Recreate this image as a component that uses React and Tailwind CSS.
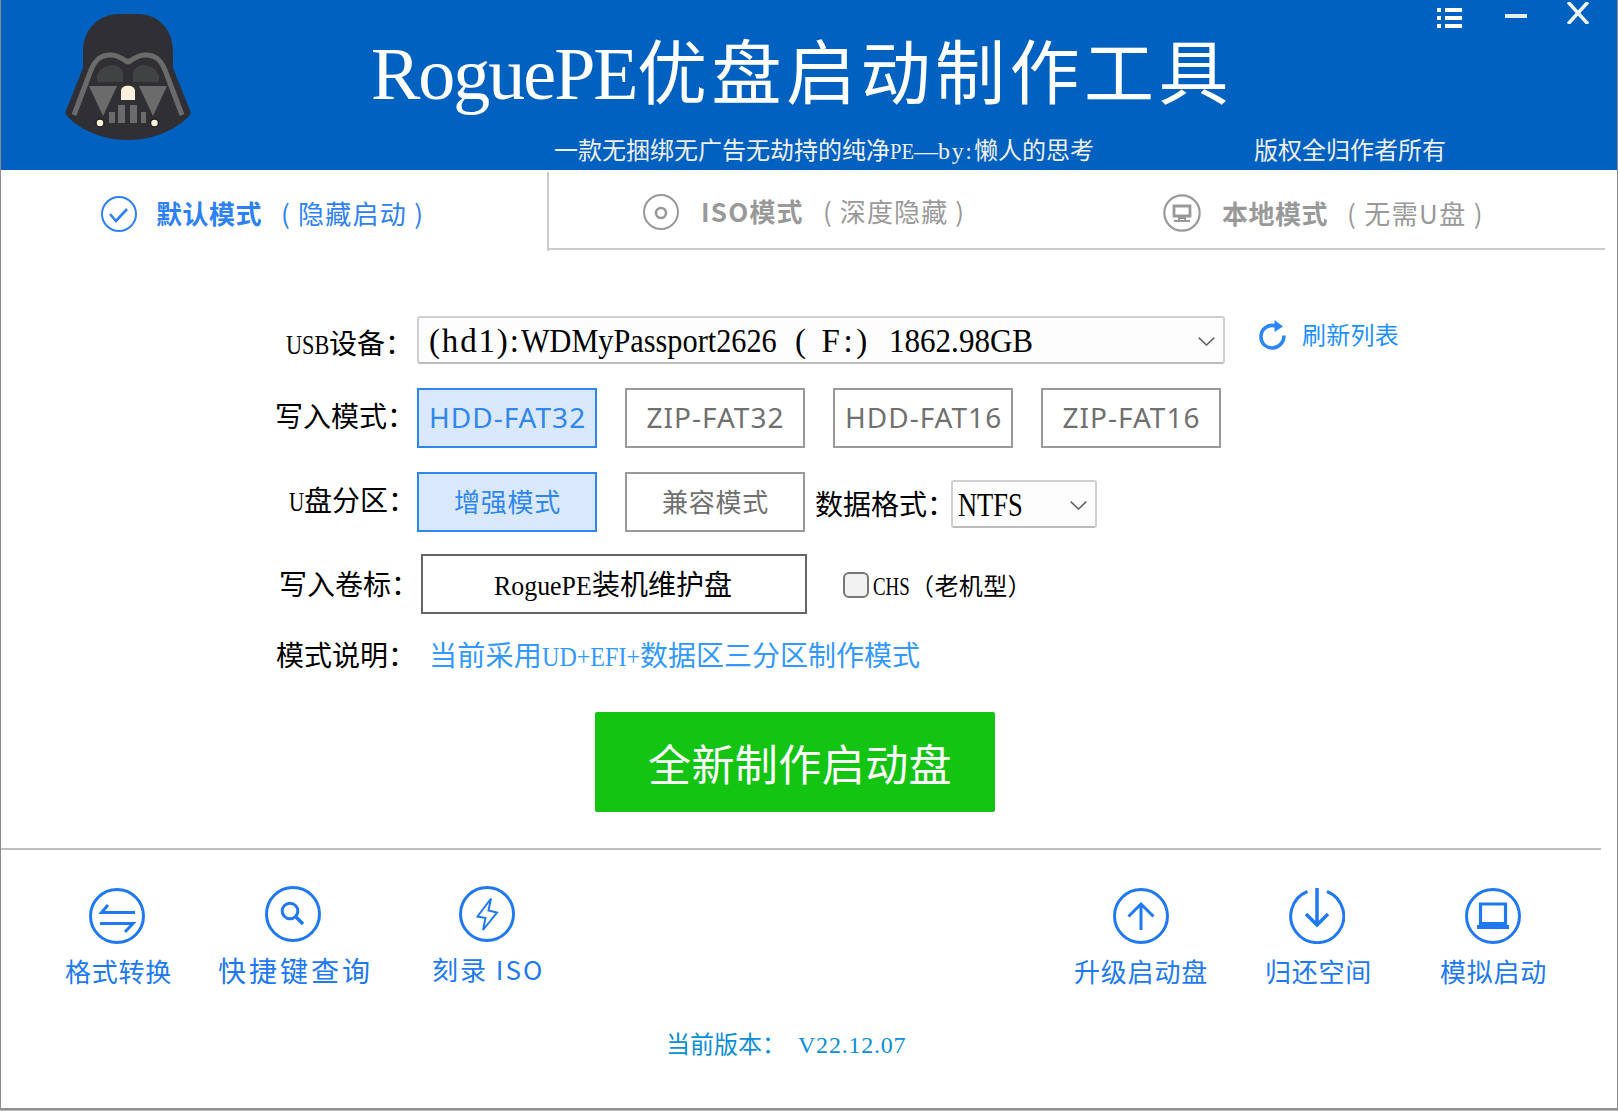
import { useLayoutEffect, useRef } from "react";

const SONG = "font-['Liberation_Serif','Noto_Sans_CJK_SC',serif]";
const HEI = "font-['Noto_Sans_CJK_SC',sans-serif]";

// Fits its text to the width of its box, by letter spacing or, with squeeze, by narrowing the glyphs.
function Fit({ className, squeeze, children }) {
  const box = useRef(null);
  const text = useRef(null);
  useLayoutEffect(() => {
    const natural = text.current.offsetWidth;
    const room = box.current.clientWidth;
    if (squeeze) {
      text.current.style.transform = `scaleX(${room / natural})`;
    } else {
      text.current.style.letterSpacing = (room - natural) / children.length + "px";
    }
  }, [children, squeeze]);
  return (
    <div ref={box} className={"shrink-0 whitespace-pre leading-none " + className}>
      <span ref={text} className={squeeze ? "block w-max origin-left" : ""}>{children}</span>
    </div>
  );
}

function HelmetLogo() {
  return (
    <svg className="mt-[14px] ml-16 h-[126px] w-[126px] shrink-0" viewBox="0 0 126 126">
      <path d="M18 54V38C18 15 34 0 54 0H73C93 0 108 15 108 38V54L126 99C122 107 98 126 63 126S4 107 0 99Z" fill="#303034" />
      <path d="M9 101L26 56C31 44 37 41 46 41C54 41 57 45 63 48C69 45 72 41 80 41C89 41 95 44 100 56L117 101" fill="none" stroke="#6b6b6b" strokeWidth="5" />
      <path d="M32 68V62C36 49 54 47 58 59V68ZM94 68V62C90 49 72 47 68 59V68Z" fill="#3f4344" />
      <path d="M24 72H52L38 102ZM74 72H102L88 102Z" fill="#6b6b6b" />
      <path d="M56 86V77C56 70 70 70 70 77V86Z" fill="#fdf0dd" />
      <path d="M44 98H50V109H44ZM53 91H60V109H53ZM65 91H72V109H65ZM76 98H81V109H76Z" fill="#6b6b6b" />
      <circle cx="35" cy="109" r="4" fill="#fdf0dd" stroke="#1f1f23" strokeWidth="1.5" />
      <circle cx="89.500" cy="109" r="4" fill="#fdf0dd" stroke="#1f1f23" strokeWidth="1.5" />
    </svg>
  );
}

function Header() {
  return (
    <header className="flex h-[170px] items-start bg-[#0061c1] text-white">
      <HelmetLogo />
      <div className="ml-[180px] w-[855px]">
        <div className={"mt-[37px] flex h-[74px] " + SONG}>
          <Fit className="w-[266px] text-[74px]">RoguePE</Fit>
          <Fit className="mt-[4px] w-[596px] text-[70px]">优盘启动制作工具</Fit>
        </div>
        <div className={"mt-[28px] flex text-[24px] text-[#f0f0f0] " + SONG}>
          <Fit className="ml-[183px] w-[336px]">一款无捆绑无广告无劫持的纯净</Fit>
          <Fit squeeze className="w-[24px]">PE</Fit>
          <Fit className="w-[24px]">—</Fit>
          <Fit className="w-[36px]">by:</Fit>
          <Fit className="w-[120px]">懒人的思考</Fit>
          <Fit className="ml-[160px] w-[192px]">版权全归作者所有</Fit>
        </div>
      </div>
      <svg className="mt-[8px] ml-[211px] h-5 w-[25px]" viewBox="0 0 25 20" fill="#fff">
        <path d="M0 0H4V4H0ZM8 0H25V4H8ZM0 8H4V12H0ZM8 8H25V12H8ZM0 16H4V20H0ZM8 16H25V20H8Z" />
      </svg>
      <div className="mt-[14px] ml-[43px] h-1 w-[22px] bg-[#e6eefa]" />
      <svg className="mt-[2px] ml-[40px] h-[22px] w-[22px]" viewBox="0 0 22 22" stroke="#f0f5fb" strokeWidth="3.600">
        <path d="M1 0L21 22M21 0L1 22" />
      </svg>
    </header>
  );
}

function Tabs() {
  return (
    <nav className={"flex h-[81px] items-start text-[26px] " + HEI}>
      <div className="flex h-[81px] w-[546px] shrink-0 items-start text-[#2d81f2]">
        <svg className="mt-[26px] ml-[100px] h-9 w-9" viewBox="0 0 36 36" fill="none" stroke="currentColor" strokeWidth="2">
          <circle cx="18" cy="18" r="17" />
          <path d="M9 18L15 25L26 13" strokeWidth="2.600" />
        </svg>
        <Fit className="mt-[30px] ml-[19px] w-[106px] font-bold">默认模式</Fit>
        <Fit className="mt-[30px] ml-[19px] w-[143px]">( 隐藏启动 )</Fit>
      </div>
      <div className="mt-[2px] h-[79px] w-[2px] shrink-0 bg-[#ccc]" />
      <div className="flex h-[80px] w-[1056px] shrink-0 items-start border-b-2 border-[#ccc] text-[#999]">
        <svg className="mt-[24px] ml-[94px] h-9 w-9" viewBox="0 0 36 36" fill="none" stroke="currentColor" strokeWidth="2">
          <circle cx="18" cy="18" r="17" />
          <circle cx="18" cy="19" r="5" strokeWidth="2.600" />
        </svg>
        <Fit className="mt-[28px] ml-[22px] w-[103px] font-bold">ISO模式</Fit>
        <Fit className="mt-[28px] ml-[19px] w-[142px]">( 深度隐藏 )</Fit>
        <svg className="mt-[24px] ml-[198px] h-[38px] w-[38px]" viewBox="0 0 38 38" fill="none" stroke="currentColor" strokeWidth="2.200">
          <circle cx="19" cy="19" r="17.700" />
          <path d="M11 12H27V22H11Z" strokeWidth="2.800" />
          <path d="M16 24H22V27H16ZM11 27H27" />
        </svg>
        <Fit className="mt-[30px] ml-[21px] w-[106px] font-bold">本地模式</Fit>
        <Fit className="mt-[30px] ml-[19px] w-[137px]">( 无需U盘 )</Fit>
      </div>
    </nav>
  );
}

function Choice({ active, textClass, children }) {
  return (
    <div
      className={
        "flex h-[60px] w-[180px] shrink-0 items-start justify-center border-2 " +
        (active ? "border-[#2e86ee] bg-[#dae8fb] text-[#2e86ee]" : "border-[#999] bg-white text-[#707070]")
      }
    >
      <Fit className={textClass}>{children}</Fit>
    </div>
  );
}

function Chevron() {
  return (
    <svg className="h-[9px] w-[17px]" viewBox="0 0 17 9" fill="none" stroke="#666" strokeWidth="1.600">
      <path d="M0.700 0.700L8.500 8L16.300 0.700" />
    </svg>
  );
}

const fat = "mt-[13px] ml-[1px] text-[28px] font-['Noto_Sans',sans-serif] ";
const part = "mt-[14px] ml-[1px] w-[107px] text-[26px] " + HEI;

function Form() {
  return (
    <main className={"h-[597px] text-[28px] text-black " + SONG}>
      <div className="flex items-start pt-[65px]">
        <Fit squeeze className="mt-[15px] ml-[285px] w-[43px]">USB</Fit>
        <Fit className="mt-[15px] w-[84px]">设备：</Fit>
        <div className="ml-[4px] flex h-[48px] w-[808px] items-start rounded-[3px] border-2 border-[#d0d0d0] border-b-[#bbb] bg-[#fdfdfd] text-[33px]">
          <Fit className="mt-[7px] ml-[10px] w-[92px]">(hd1):</Fit>
          <Fit squeeze className="mt-[7px] w-[256px]">WDMyPassport2626</Fit>
          <Fit className="mt-[7px] ml-[18px] w-[76px]">( F:)</Fit>
          <Fit squeeze className="mt-[7px] ml-[18px] w-[144px]">1862.98GB</Fit>
          <div className="mt-[19px] ml-[165px]">
            <Chevron />
          </div>
        </div>
        <svg className="mt-[4px] ml-[34px] h-[30px] w-[27px]" viewBox="0 0 27 30" fill="none">
          <path d="M18 6.500C10 3 2 8.500 2 16.500S8 28 13.500 28S25 23 25 15.500" stroke="#2b86f5" strokeWidth="3.600" />
          <path d="M15.500 0L24 6.500L15.500 12Z" fill="#2b86f5" />
        </svg>
        <Fit className={"mt-[6px] ml-[16px] w-[97px] text-[24px] text-[#1e90ff] " + HEI}>刷新列表</Fit>
      </div>

      <div className="mt-6 flex items-start">
        <Fit className="mt-[16px] ml-[274px] w-[140px]">写入模式：</Fit>
        <div className="ml-[2px] flex gap-7">
          <Choice active textClass={fat + "w-[157px]"}>HDD-FAT32</Choice>
          <Choice textClass={fat + "w-[138px]"}>ZIP-FAT32</Choice>
          <Choice textClass={fat + "w-[157px]"}>HDD-FAT16</Choice>
          <Choice textClass={fat + "w-[138px]"}>ZIP-FAT16</Choice>
        </div>
      </div>

      <div className="mt-6 flex items-start">
        <Fit squeeze className="mt-[16px] ml-[288px] w-[15px]">U</Fit>
        <Fit className="mt-[16px] w-[112px]">盘分区：</Fit>
        <div className="ml-[1px] flex gap-7">
          <Choice active textClass={part}>增强模式</Choice>
          <Choice textClass={part}>兼容模式</Choice>
        </div>
        <Fit className="mt-[20px] -mr-[4px] ml-[10px] w-[140px]">数据格式：</Fit>
        <div className="mt-[8px] flex h-[48px] w-[146px] items-start rounded-[3px] border-2 border-[#d0d0d0] border-b-[#bbb] bg-[#fdfdfd]">
          <Fit squeeze className="mt-[7px] ml-[5px] w-[65px] text-[33px]">NTFS</Fit>
          <div className="mt-[19px] ml-[47px]">
            <Chevron />
          </div>
        </div>
      </div>

      <div className="mt-[22px] flex items-start">
        <Fit className="mt-[18px] ml-[278px] w-[140px]">写入卷标：</Fit>
        <div className="ml-[2px] flex h-[60px] w-[386px] items-start border-2 border-[#666] bg-white">
          <Fit squeeze className="mt-[16px] ml-[71px] w-[98px]">RoguePE</Fit>
          <Fit className="mt-[16px] w-[140px]">装机维护盘</Fit>
        </div>
        <div className="mt-[18px] ml-[36px] h-[26px] w-[26px] rounded-[6px] border-2 border-[#777] bg-[#f2f2f2]" />
        <Fit squeeze className="mt-[20px] ml-[4px] w-[37px] text-[25px]">CHS</Fit>
        <Fit className="mt-[21px] w-[122px] text-[24px]">（老机型）</Fit>
      </div>

      <div className="mt-[29px] flex items-start">
        <Fit className="ml-[275px] w-[140px]">模式说明：</Fit>
        <div className="ml-[13px] flex text-[#3399ff]">
          <Fit className="w-[113px]">当前采用</Fit>
          <Fit squeeze className="w-[98px]">UD+EFI+</Fit>
          <Fit className="w-[280px]">数据区三分区制作模式</Fit>
        </div>
      </div>

      <div className={"mt-[41px] ml-[594px] flex h-[100px] w-[400px] items-start justify-center rounded-[2px] bg-[#13c413] text-[43px] text-white " + HEI}>
        <Fit className="mt-[29px] ml-[10px] w-[304px]">全新制作启动盘</Fit>
      </div>
    </main>
  );
}

function Ring({ children, open }) {
  return (
    <svg className="h-14 w-14" viewBox="0 0 56 56" fill="none" stroke="currentColor" strokeWidth="3">
      {open ? <path d="M18.500 3.500A26.500 26.500 0 1 0 38 3.500" /> : <circle cx="28" cy="28" r="26.500" />}
      {children}
    </svg>
  );
}

function Tool({ className, icon, open, label, labelClass }) {
  return (
    <div className={"flex shrink-0 flex-col items-start " + className}>
      <Ring open={open}>{icon}</Ring>
      <Fit className={"mt-[14px] " + labelClass}>{label}</Fit>
    </div>
  );
}

function Toolbar() {
  return (
    <section className={"flex h-[172px] w-[1600px] items-start border-t-2 border-[#bfbfbf] text-[26px] text-[#2079f0] " + HEI}>
      <Tool
        className="mt-[38px] ml-[88px] w-[88px]"
        label="格式转换"
        labelClass="w-[107px] -ml-[24px]"
        icon={<path d="M19 17L12.500 24.500H46M11 35.500H44L36 44" />}
      />
      <Tool
        className="mt-[36px] ml-[88px] w-[106px]"
        label="快捷键查询"
        labelClass="w-[155px] -ml-[47px] text-[28px]"
        icon={<><circle cx="25" cy="25" r="7.800" /><path d="M30.500 30.500L38 38" strokeWidth="3.500" /></>}
      />
      <Tool
        className="mt-[36px] ml-[88px] w-[84px]"
        label="刻录 ISO"
        labelClass="w-[112px] -ml-[27px]"
        icon={<path d="M32 12.500L18.500 30.500L26.500 32L24 44L38 26.500L29.500 24.500Z" strokeWidth="2" />}
      />
      <Tool
        className="mt-[38px] ml-[570px] w-[88px]"
        label="升级启动盘"
        labelClass="w-[134px] -ml-[39px]"
        icon={<path d="M28 42V16M15.500 28.500L28 16L40.500 28.500" />}
      />
      <Tool
        className="mt-[38px] ml-[88px] w-[88px]"
        open
        label="归还空间"
        labelClass="w-[107px] -ml-[24px]"
        icon={<path d="M28 0V36M17 26L28 37L39 26" strokeWidth="3.500" />}
      />
      <Tool
        className="mt-[38px] ml-[88px] w-[88px]"
        label="模拟启动"
        labelClass="w-[107px] -ml-[25px]"
        icon={<><path d="M15.500 16H40.500V36H15.500Z" strokeWidth="3.200" /><path d="M15 34H41V37H44V41H12V37H15Z" fill="currentColor" stroke="none" /></>}
      />
    </section>
  );
}

export default function App() {
  return (
    <div className="flex h-[1111px] w-[1618px] flex-col overflow-hidden bg-white">
      <div className="h-[1108px] border-x border-[#8c8c8c]">
        <Header />
        <Tabs />
        <Form />
        <Toolbar />
        <footer className={"flex pt-[13px] text-[24px] text-[#0a8fd6] " + SONG}>
          <Fit className="ml-[665px] w-[120px]">当前版本：</Fit>
          <Fit className="ml-[12px] w-[108px]">V22.12.07</Fit>
        </footer>
      </div>
      <div className="h-[2px] bg-[#909090]" />
      <div className="h-px bg-[#bababa]" />
    </div>
  );
}
